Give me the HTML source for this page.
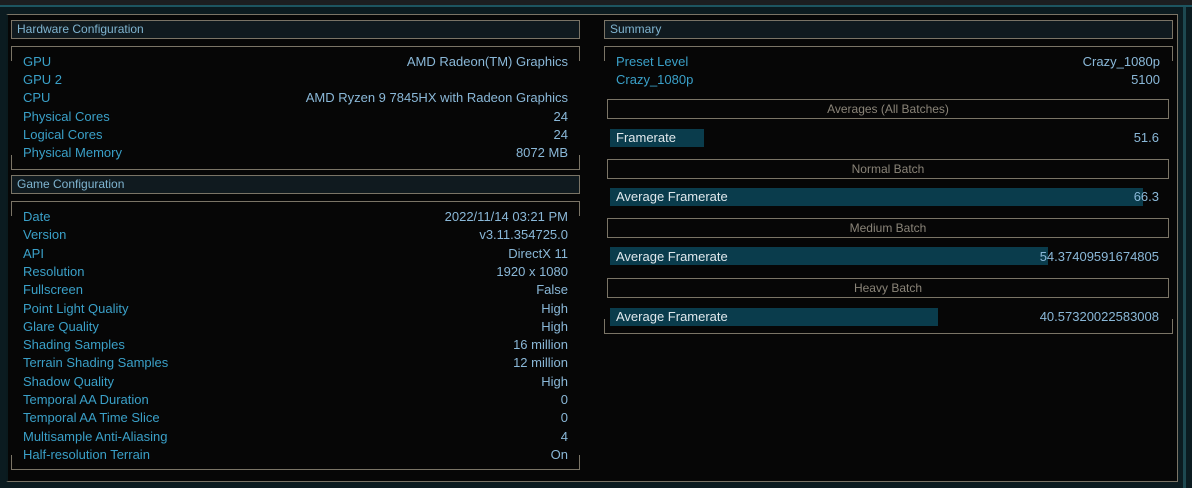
<!DOCTYPE html>
<html><head><style>
*{margin:0;padding:0;box-sizing:border-box}
body{width:1192px;height:488px;background:#0b1b20;position:relative;overflow:hidden;font-family:"Liberation Sans",sans-serif;font-size:13px}
.a{position:absolute}
.hdr{position:absolute;height:19px;border:1px solid #7a7466;background:#101a1f;color:#7fb4d0;font-size:12px;line-height:17px;padding-left:5px}
.box{position:absolute;border-top:1px solid #7a7466;border-bottom:1px solid #7a7466}
.box:before,.box:after{content:"";position:absolute;top:0;width:1px;height:14px;background:#7a7466}
.box:before{left:0}.box:after{right:0}
.tk{position:absolute;bottom:0;width:1px;height:14px;background:#7a7466}
.row{position:absolute;height:18px;line-height:18px;color:#3aa0c8}
.row .v{position:absolute;right:0;top:0;color:#8ab8d8}
.sh{position:absolute;left:607px;width:562px;height:20px;border:1px solid #7a7466;color:#8a8478;font-size:12px;line-height:18px;text-align:center}
.bar{position:absolute;left:610px;height:18px;background:#0a3c4c}
.bl{position:absolute;left:616px;color:#e0e8ec;line-height:18px;height:18px}
.bv{position:absolute;right:33px;color:#8ab8d8;line-height:18px;height:18px}
</style></head><body>
<div class="a" style="left:0;top:0;width:1192px;height:5px;background:#1c1e20"></div>
<div class="a" style="left:0;top:5px;width:1192px;height:2px;background:#1d5560"></div>
<div class="a" style="left:1183px;top:7px;width:3px;height:481px;background:#1d4850"></div>
<div class="a" style="left:6px;top:14px;width:1172px;height:468px;background:#060606;border:1px solid #7a7466;border-left:2px solid #0a1a1e"></div>

<div class="hdr" style="left:11px;top:20px;width:569px">Hardware Configuration</div>
<div class="box" style="left:11px;top:46px;width:569px;height:124px"><div class="tk" style="left:0"></div><div class="tk" style="right:0"></div></div>
<div class="hdr" style="left:11px;top:175px;width:569px">Game Configuration</div>
<div class="box" style="left:11px;top:201px;width:569px;height:269px"><div class="tk" style="left:0"></div><div class="tk" style="right:0"></div></div>
<div class="hdr" style="left:604px;top:20px;width:569px">Summary</div>
<div class="box" style="left:604px;top:46px;width:569px;height:288px"><div class="tk" style="left:0"></div><div class="tk" style="right:0"></div></div>

<div class="a" style="left:23px;top:53px;width:545px">
<div class="row" style="top:0;width:100%">GPU<span class="v">AMD Radeon(TM) Graphics</span></div>
<div class="row" style="top:18.2px;width:100%">GPU 2<span class="v"></span></div>
<div class="row" style="top:36.4px;width:100%">CPU<span class="v">AMD Ryzen 9 7845HX with Radeon Graphics</span></div>
<div class="row" style="top:54.6px;width:100%">Physical Cores<span class="v">24</span></div>
<div class="row" style="top:72.8px;width:100%">Logical Cores<span class="v">24</span></div>
<div class="row" style="top:91px;width:100%">Physical Memory<span class="v">8072 MB</span></div>
</div>

<div class="a" style="left:23px;top:208px;width:545px">
<div class="row" style="top:0px;width:100%">Date<span class="v">2022/11/14 03:21 PM</span></div>
<div class="row" style="top:18.3px;width:100%">Version<span class="v">v3.11.354725.0</span></div>
<div class="row" style="top:36.6px;width:100%">API<span class="v">DirectX 11</span></div>
<div class="row" style="top:54.9px;width:100%">Resolution<span class="v">1920 x 1080</span></div>
<div class="row" style="top:73.2px;width:100%">Fullscreen<span class="v">False</span></div>
<div class="row" style="top:91.5px;width:100%">Point Light Quality<span class="v">High</span></div>
<div class="row" style="top:109.8px;width:100%">Glare Quality<span class="v">High</span></div>
<div class="row" style="top:128.1px;width:100%">Shading Samples<span class="v">16 million</span></div>
<div class="row" style="top:146.4px;width:100%">Terrain Shading Samples<span class="v">12 million</span></div>
<div class="row" style="top:164.7px;width:100%">Shadow Quality<span class="v">High</span></div>
<div class="row" style="top:183px;width:100%">Temporal AA Duration<span class="v">0</span></div>
<div class="row" style="top:201.3px;width:100%">Temporal AA Time Slice<span class="v">0</span></div>
<div class="row" style="top:219.6px;width:100%">Multisample Anti-Aliasing<span class="v">4</span></div>
<div class="row" style="top:237.9px;width:100%">Half-resolution Terrain<span class="v">On</span></div>
</div>

<div class="a" style="left:616px;top:53px;width:544px">
<div class="row" style="top:0;width:100%">Preset Level<span class="v">Crazy_1080p</span></div>
<div class="row" style="top:18.2px;width:100%">Crazy_1080p<span class="v">5100</span></div>
</div>

<div class="sh" style="top:99px">Averages (All Batches)</div>
<div class="bar" style="top:129px;width:94px"></div>
<div class="bl" style="top:129px">Framerate</div><div class="bv" style="top:129px">51.6</div>

<div class="sh" style="top:159px">Normal Batch</div>
<div class="bar" style="top:188px;width:533px"></div>
<div class="bl" style="top:188px">Average Framerate</div><div class="bv" style="top:188px">66.3</div>

<div class="sh" style="top:218px">Medium Batch</div>
<div class="bar" style="top:247px;width:438px"></div>
<div class="bl" style="top:248px">Average Framerate</div><div class="bv" style="top:248px">54.37409591674805</div>

<div class="sh" style="top:278px">Heavy Batch</div>
<div class="bar" style="top:308px;width:328px"></div>
<div class="bl" style="top:308px">Average Framerate</div><div class="bv" style="top:308px">40.57320022583008</div>
</body></html>
